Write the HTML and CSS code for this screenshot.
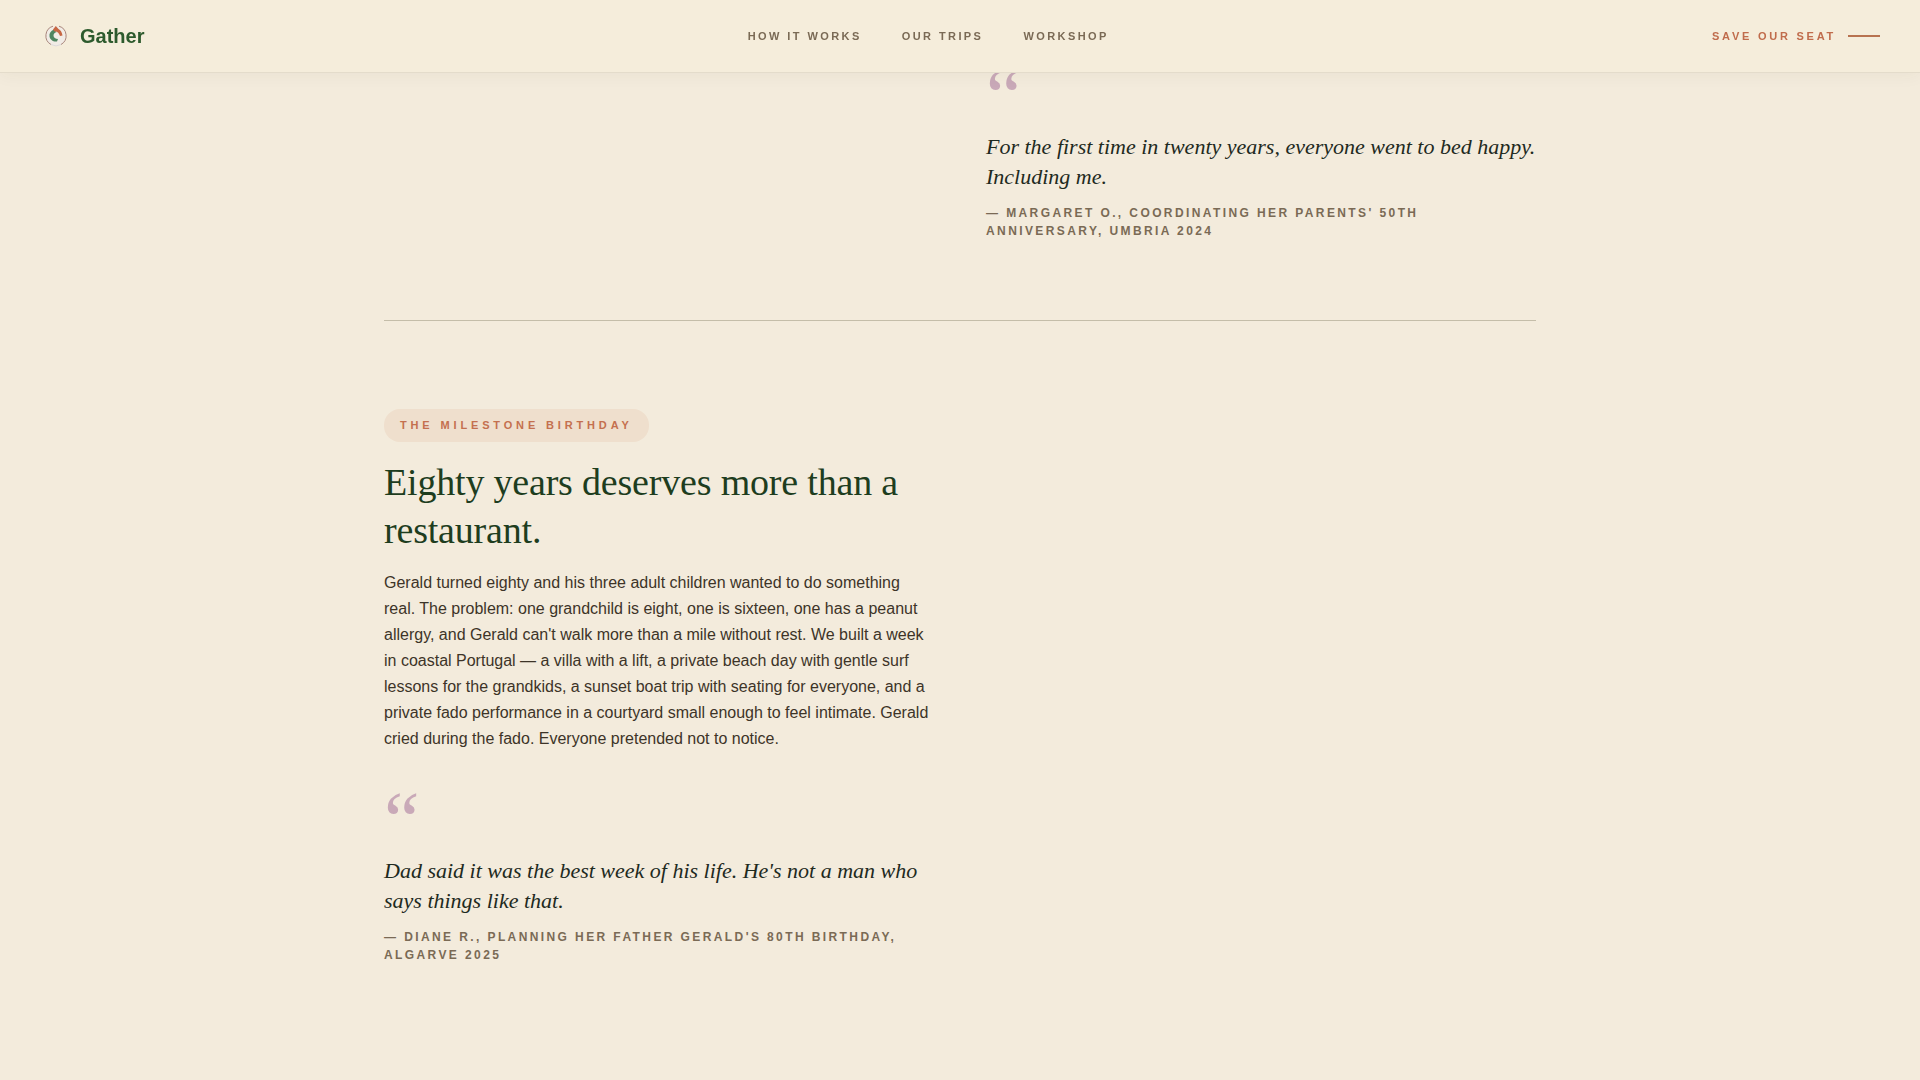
FILE: index.html
```html
<!DOCTYPE html>
<html lang="en">
<head>
  <meta charset="UTF-8">
  <meta name="viewport" content="width=device-width, initial-scale=1.0">
  <title>Gather</title>
  <link rel="stylesheet" href="styles.css">
</head>
<body>
  <header class="nav">
    <a href="#" class="brand">
      <svg class="brand-logo" viewBox="0 0 24 24" aria-hidden="true">
        <circle cx="12" cy="12" r="10" fill="#f1ece6"/>
        <path d="M7 20.5A10 10 0 0 1 9 2.2M15 2.2A10 10 0 0 1 17 20.5" fill="none" stroke="#a8857c" stroke-width="1"/>
        <path d="M7 20.5A10 10 0 0 0 17 20.5" fill="none" stroke="#dedbdc" stroke-width="1"/>
        <path d="M10 5.5C6.500 7 5 9.500 5.500 12.500C6 15.500 9 18 13 17.500L14 15C11.500 15 9.500 13.500 9.500 11.500C9.500 9.500 11 8.500 12.500 8.200Z" fill="#4f8560"/>
        <path d="M11.800 2L9 5.500L10.500 7.500C14 7.500 15 9.500 16 12L18.500 11.500C18 8 16.500 6 14.500 5Z" fill="#c76743"/>
      </svg>
      <span>Gather</span>
    </a>
    <nav class="nav-links">
      <a href="#how">How it works</a>
      <a href="#trips">Our trips</a>
      <a href="#workshop">Workshop</a>
    </nav>
    <a href="#seat" class="nav-cta">Save our seat</a>
  </header>

  <main class="stories" id="trips">
    <article class="story story-right">
      <div class="story-text">
        <blockquote class="quote">
          <p>For the first time in twenty years, everyone went to bed happy. Including me.</p>
          <cite>— Margaret O., coordinating her parents' 50th anniversary, Umbria 2024</cite>
        </blockquote>
      </div>
    </article>

    <article class="story">
      <div class="story-text">
        <span class="tag">The milestone birthday</span>
        <h2>Eighty years deserves more than a restaurant.</h2>
        <p class="story-body">Gerald turned eighty and his three adult children wanted to do something real. The problem: one grandchild is eight, one is sixteen, one has a peanut allergy, and Gerald can't walk more than a mile without rest. We built a week in coastal Portugal — a villa with a lift, a private beach day with gentle surf lessons for the grandkids, a sunset boat trip with seating for everyone, and a private fado performance in a courtyard small enough to feel intimate. Gerald cried during the fado. Everyone pretended not to notice.</p>
        <blockquote class="quote">
          <p>Dad said it was the best week of his life. He's not a man who says things like that.</p>
          <cite>— Diane R., planning her father Gerald's 80th birthday, Algarve 2025</cite>
        </blockquote>
      </div>
    </article>
  </main>
</body>
</html>
```
FILE: styles.css
```css
* {
  box-sizing: border-box;
}
body {
  margin: 0;
  font-family: "Liberation Sans", Arial, sans-serif;
  font-size: 16px;
  line-height: 26px;
  color: #3d3428;
  background-color: #f3ebdc;
}
h2, p, blockquote {
  margin: 0;
}
a {
  text-decoration: none;
}

/* top bar */
.nav {
  position: fixed;
  top: 0;
  left: 0;
  right: 0;
  z-index: 10;
  display: flex;
  justify-content: space-between;
  align-items: center;
  height: 73px;
  padding: 0 40px;
  background-color: #f5eddb;
  border-bottom: 1px solid #e4dccb;
  box-shadow: 0 2px 16px rgba(60, 50, 30, 0.05);
}
.brand {
  display: flex;
  align-items: center;
  gap: 8px;
  font-size: 20px;
  font-weight: bold;
  color: #2d5a2d;
}
.brand-logo {
  width: 32px;
  height: 24px;
}
.nav-links {
  display: flex;
  gap: 40px;
}
.nav-links a, .nav-cta {
  font-size: 11px;
  font-weight: bold;
  letter-spacing: 0.22em;
  text-transform: uppercase;
  color: #7a6a55;
}
.nav-cta {
  display: flex;
  align-items: center;
  gap: 12px;
  letter-spacing: 0.25em;
  color: #c06c4c;
}
.nav-cta::after {
  content: "";
  width: 32px;
  height: 2px;
  background-color: #b87350;
}

/* stories */
.stories {
  max-width: 1152px;
  margin: 0 auto;
  padding-top: 60px;
}
.story {
  display: grid;
  grid-template-columns: 1fr 1fr;
  gap: 52px;
  padding-bottom: 80px;
}
.story + .story {
  padding-top: 88px;
  border-top: 1px solid #c4bda9;
}
.story-right .story-text {
  grid-column: 2;
}
.tag {
  display: inline-block;
  padding: 8px 16px;
  border-radius: 16px;
  font-size: 11px;
  line-height: 17px;
  font-weight: bold;
  letter-spacing: 0.35em;
  text-transform: uppercase;
  color: #c4704f;
  background-color: #efdfcd;
}
h2 {
  margin: 16px 0;
  font-family: "Liberation Serif", "Times New Roman", serif;
  font-size: 38px;
  line-height: 48px;
  font-weight: normal;
  letter-spacing: -0.005em;
  color: #1e3d1e;
}
.quote {
  font-family: "Liberation Serif", "Times New Roman", serif;
}
.story-body + .quote {
  margin-top: 32px;
}
.quote::before {
  content: "\201C";
  display: block;
  font-size: 80px;
  line-height: 72px;
  color: #c9a9b8;
}
.quote p {
  font-size: 22px;
  line-height: 30px;
  font-style: italic;
  color: #1e2a1e;
}
.quote cite {
  display: block;
  margin-top: 12px;
  font-family: "Liberation Sans", Arial, sans-serif;
  font-size: 12px;
  line-height: 18px;
  font-style: normal;
  font-weight: bold;
  letter-spacing: 0.2em;
  text-transform: uppercase;
  color: #7a6a55;
}
```
